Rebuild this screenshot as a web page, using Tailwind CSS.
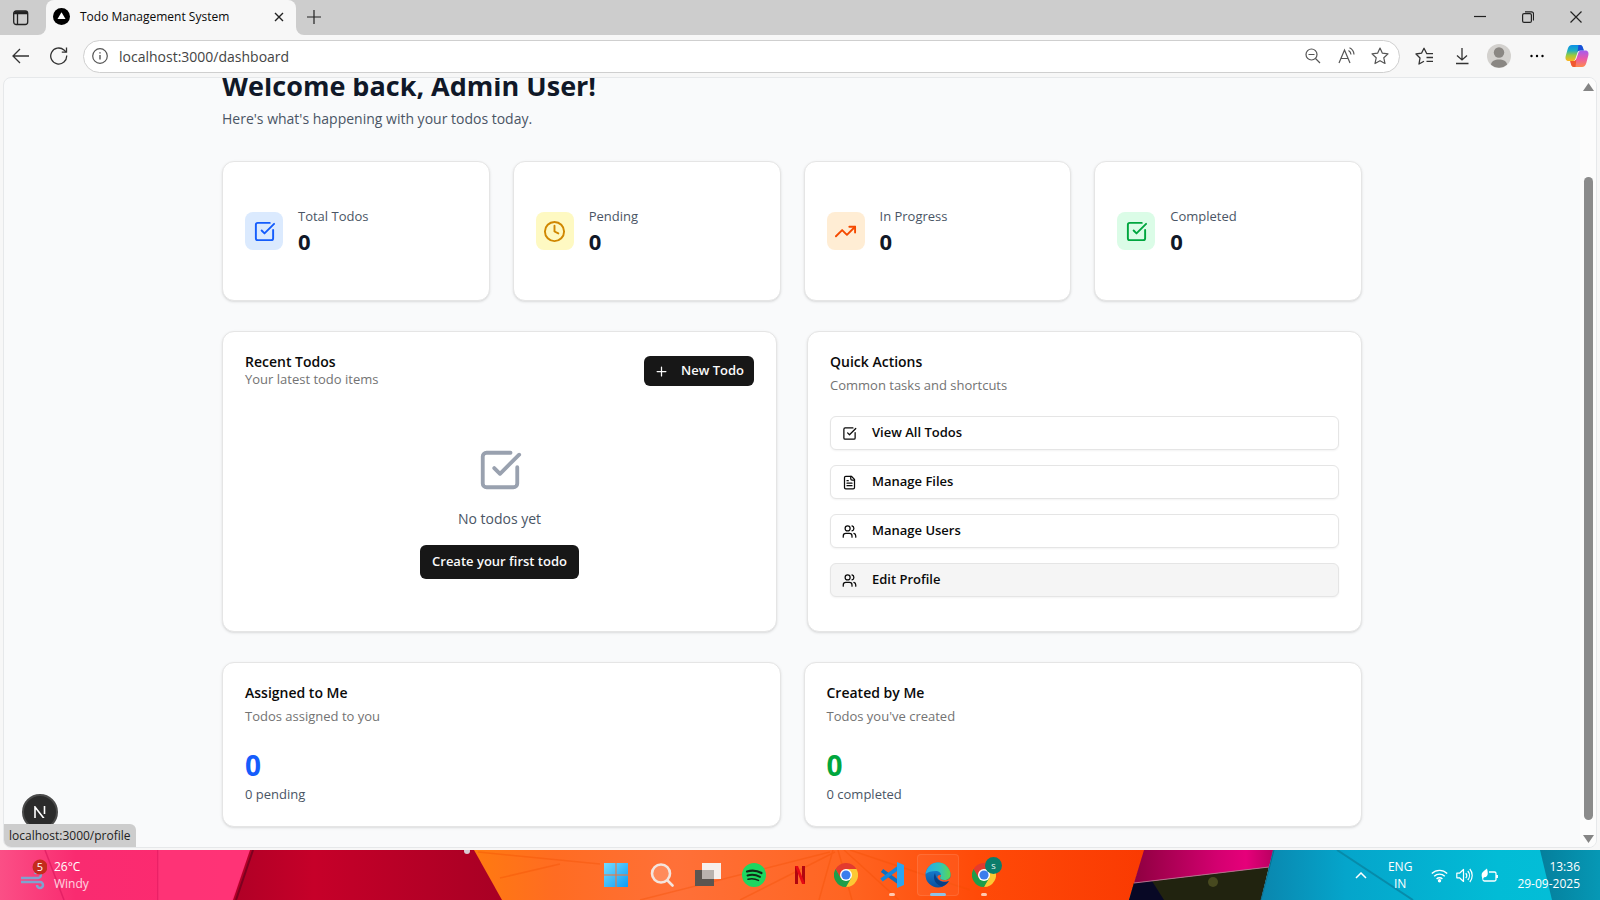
<!DOCTYPE html>
<html lang="en">
<head>
<meta charset="utf-8">
<title>Todo Management System</title>
<script src="https://cdn.jsdelivr.net/npm/@tailwindcss/browser@4"></script>
</head>
<body class="font-['Open_Sans','Noto_Sans',sans-serif] text-[13px] text-neutral-950">
<svg class="hidden">
  <symbol id="check" viewBox="0 0 24 24"><g fill="none" stroke="currentColor" stroke-width="2" stroke-linecap="round" stroke-linejoin="round"><path d="M21 10.500V19a2 2 0 0 1-2 2H5a2 2 0 0 1-2-2V5a2 2 0 0 1 2-2h12.500"/><path d="m9 11 3 3L22 4"/></g></symbol>
  <symbol id="clock" viewBox="0 0 24 24"><g fill="none" stroke="currentColor" stroke-width="2" stroke-linecap="round" stroke-linejoin="round"><circle cx="12" cy="12" r="10"/><path d="M12 6v6l4 2"/></g></symbol>
  <symbol id="trend" viewBox="0 0 24 24"><g fill="none" stroke="currentColor" stroke-width="2" stroke-linecap="round" stroke-linejoin="round"><path d="M16 7h6v6"/><path d="m22 7-8.500 8.500-5-5L2 17"/></g></symbol>
  <symbol id="file" viewBox="0 0 24 24"><g fill="none" stroke="currentColor" stroke-width="2" stroke-linecap="round" stroke-linejoin="round"><path d="M15 2H6a2 2 0 0 0-2 2v16a2 2 0 0 0 2 2h12a2 2 0 0 0 2-2V7Z"/><path d="M14 2v4a2 2 0 0 0 2 2h4M10 9H8M16 13H8M16 17H8"/></g></symbol>
  <symbol id="users" viewBox="0 0 24 24"><g fill="none" stroke="currentColor" stroke-width="2" stroke-linecap="round" stroke-linejoin="round"><path d="M16 21v-2a4 4 0 0 0-4-4H6a4 4 0 0 0-4 4v2"/><circle cx="9" cy="7" r="4"/><path d="M22 21v-2a4 4 0 0 0-3-3.870M16 3.130a4 4 0 0 1 0 7.750"/></g></symbol>
  <symbol id="chrome" viewBox="0 0 24 24"><path fill="#fcc934" d="M17.200 9 12 24A12 12 0 0 0 22.400 6H12Z"/><path fill="#e33b2e" d="M1.600 6A12 12 0 0 1 22.400 6H12L6.800 15Z"/><path fill="#1e9e4a" d="M1.600 6A12 12 0 0 0 12 24l5.200-9-10.400 0Z"/><circle cx="12" cy="12" r="6" fill="#fff"/><circle cx="12" cy="12" r="4.600" fill="#3b7ded"/></symbol>
</svg>

<div class="flex h-screen flex-col overflow-hidden bg-[#f7f7f7]">
  <!-- Tab strip -->
  <header class="flex h-[35px] shrink-0">
    <div class="flex w-[46px] items-center rounded-br-lg bg-[#cdcdcd] pl-3">
      <button aria-label="Tab actions"><svg class="size-[18px]" viewBox="0 0 18 18" fill="none" stroke="#222" stroke-width="1.300"><rect x="1.700" y="2" width="14" height="13.500" rx="2.500"/><path d="M1.700 4.500h14M5.500 4v11.500"/><path d="M2.500 3.500h12.500" stroke-width="2.500"/></svg></button>
    </div>
    <div class="w-[250px] bg-[#cdcdcd]">
      <div class="flex h-full items-center rounded-t-lg bg-[#f7f7f7] pr-2 pb-[2px] pl-[7px]">
        <svg class="size-[17px]" viewBox="0 0 17 17"><circle cx="8.500" cy="8.500" r="8.500"/><path d="M8.500 4.200 12.500 11h-8Z" fill="#fff"/></svg>
        <span class="ml-[10px] flex-1 text-[12px]">Todo Management System</span>
        <button aria-label="Close tab" class="grid size-[18px] place-items-center"><svg class="size-[10px]" viewBox="0 0 10 10" stroke="#222" stroke-width="1.400"><path d="m1 1 8 8M9 1 1 9"/></svg></button>
      </div>
    </div>
    <div class="flex flex-1 items-center rounded-bl-lg bg-[#cdcdcd] pb-[2px] pl-[10px]">
      <button aria-label="New tab"><svg class="size-4" viewBox="0 0 16 16" stroke="#222" stroke-width="1.200"><path d="M8 1v14M1 8h14"/></svg></button>
      <div class="ml-auto flex">
        <button aria-label="Minimize" class="grid w-12 place-items-center"><svg class="size-3" viewBox="0 0 12 12" stroke="#222" stroke-width="1.200"><path d="M0 5.500h12"/></svg></button>
        <button aria-label="Restore" class="grid w-12 place-items-center"><svg class="size-3" viewBox="0 0 12 12" fill="none" stroke="#222" stroke-width="1.200"><rect x=".6" y="2.600" width="8.800" height="8.800" rx="1.500"/><path d="M3 .8h6.500a2 2 0 0 1 2 2V9.500"/></svg></button>
        <button aria-label="Close window" class="grid w-12 place-items-center"><svg class="size-3" viewBox="0 0 12 12" stroke="#222" stroke-width="1.200"><path d="m.5.5 11 11m0-11-11 11"/></svg></button>
      </div>
    </div>
  </header>

  <!-- Toolbar -->
  <nav class="flex h-[42px] shrink-0 items-center pr-[11px] pl-3 text-[#333]">
    <button aria-label="Back"><svg class="size-[18px]" viewBox="0 0 18 18" fill="none" stroke="currentColor" stroke-width="1.300"><path d="M17 9H1M8 2 1 9l7 7"/></svg></button>
    <button aria-label="Refresh" class="ml-5"><svg class="size-[18px]" viewBox="0 0 18 18" fill="none" stroke="currentColor" stroke-width="1.300"><path d="M16.700 8.500A8 8 0 1 1 14 3l2 2"/><path d="M16.500 0.500V5.200h-4.700"/></svg></button>
    <div class="ml-[15px] flex h-[33px] flex-1 items-center rounded-full border border-[#cfcfcf] bg-white pr-[10px] pl-2 text-[#555]">
      <svg class="size-4" viewBox="0 0 16 16" fill="none" stroke="currentColor" stroke-width="1.200"><circle cx="8" cy="8" r="7.300"/><path d="M8 7v4.500M8 4.200v1.400" stroke-width="1.400"/></svg>
      <input aria-label="Address" value="localhost:3000/dashboard" class="ml-[11px] min-w-0 flex-1 bg-transparent text-[14px] text-[#444] outline-none">
      <button aria-label="Zoom out"><svg class="size-4" viewBox="0 0 16 16" fill="none" stroke="currentColor" stroke-width="1.200"><circle cx="6.500" cy="6.500" r="5.500"/><path d="M3.500 6.500h6M10.500 10.500 15 15"/></svg></button>
      <button aria-label="Read aloud" class="ml-[17px]"><svg class="size-[18px]" viewBox="0 0 18 18" fill="none" stroke="currentColor" stroke-width="1.200"><path d="M1 16 6.500 3 12 16M3 11.500h7M10.500 3.500a5 5 0 0 1 2.500 4M11.500.8a8 8 0 0 1 4.500 6.700"/></svg></button>
      <button aria-label="Add to favorites" class="ml-[15px]"><svg class="size-[18px]" viewBox="0 0 18 18" fill="none" stroke="currentColor" stroke-width="1.200" stroke-linejoin="round"><path d="m9 1 2.400 5.200 5.600.7-4.200 3.900 1.200 5.700L9 13.700l-5 2.800 1.200-5.700L1 6.900l5.600-.7Z"/></svg></button>
    </div>
    <button aria-label="Favorites" class="ml-[15px]"><svg class="size-[19px]" viewBox="0 0 19 19" fill="none" stroke="currentColor" stroke-width="1.300" stroke-linejoin="round"><path d="M18 6.700h-6.200L9 1.300 6.500 6.200 1 7l4 4-1 6 5-2.700M11.500 10.500H18M11.500 14.300H18"/></svg></button>
    <button aria-label="Downloads" class="ml-[19px]"><svg class="size-[18px]" viewBox="0 0 18 18" fill="none" stroke="currentColor" stroke-width="1.300"><path d="M9 1v12M4 8.500 9 13l5-4.500M3 16.500h12.500"/></svg></button>
    <button aria-label="Profile" class="ml-4"><svg class="size-6" viewBox="0 0 24 24"><circle cx="12" cy="12" r="12" fill="#d3d1ce"/><circle cx="12" cy="8.500" r="5.200" fill="#8a8783"/><path d="M4 20.800c0-7 16-7 16 0a12 12 0 0 1-16 0Z" fill="#8a8783"/></svg></button>
    <button aria-label="More" class="ml-[18px]"><svg class="size-4" viewBox="0 0 16 16"><circle cx="2.500" cy="8" r="1.200"/><circle cx="8" cy="8" r="1.200"/><circle cx="13.500" cy="8" r="1.200"/></svg></button>
    <button aria-label="Copilot" class="ml-5"><svg class="size-6" viewBox="0 0 24 24">
      <defs><linearGradient id="cl" x2="0" y2="1"><stop stop-color="#0b8fe8"/><stop offset=".35" stop-color="#1fb0c0"/><stop offset=".65" stop-color="#9ccb3c"/><stop offset="1" stop-color="#ffb51f"/></linearGradient><linearGradient id="cr" x2="0" y2="1"><stop stop-color="#a45cf0"/><stop offset=".5" stop-color="#e95aa8"/><stop offset="1" stop-color="#ff8a4c"/></linearGradient></defs>
      <path d="M7 1h8c2 0 2.600 1.500 3 3l.8 2.500h-4c-1.500 0-2 1-2.400 2.200l-2 6C9.800 16.500 9 17 7 17H4c-3 0-4-2-3.300-5l2-7C3.500 2.500 4.800 1 7 1Z" fill="url(#cl)"/>
      <path d="M13.500 1H15c2 0 2.600 1.500 3 3l.8 2.500h-4c-1.200 0-2 .7-2.400 2Z" fill="#1b50d8"/>
      <path d="M17 23H9c-2 0-2.600-1.500-3-3l-.8-3H9c1.500 0 2-1 2.400-2.200l2-6C14 7 15 6.500 17 6.500h3c3 0 4 2 3.300 5l-2 7.500C20.500 21.500 19.200 23 17 23Z" fill="url(#cr)"/>
      <path d="M10.500 23H9c-2 0-2.600-1.500-3-3l-.8-3H9c1.500 0 2-1 2.400-2.200Z" fill="#f0582e"/></svg></button>
  </nav>

  <!-- Page viewport -->
  <div class="relative mx-[3px] mb-[2px] flex min-h-0 flex-1 overflow-hidden rounded-lg border border-[#e6e8ea] bg-gray-50">
    <main class="flex-1">
      <div class="mx-auto w-full max-w-[1140px]">
        <h1 class="text-[27px] leading-4 font-bold text-gray-900">Welcome back, Admin User!</h1>
        <p class="mt-[14px] text-[14px] leading-[22px] text-gray-600">Here's what's happening with your todos today.</p>

        <section class="mt-[31px] grid grid-cols-4 gap-[23px]">
          <div class="flex h-[140px] items-center rounded-xl border border-neutral-200 bg-white px-[22px] shadow-sm">
            <span class="grid size-[38px] place-items-center rounded-lg bg-blue-100 text-blue-600"><svg class="size-[23px]"><use href="#check"/></svg></span>
            <div class="ml-[15px]"><p class="text-[13px] leading-5 font-medium text-gray-600">Total Todos</p><p class="text-[22px] leading-[30px] font-bold text-gray-900">0</p></div>
          </div>
          <div class="flex h-[140px] items-center rounded-xl border border-neutral-200 bg-white px-[22px] shadow-sm">
            <span class="grid size-[38px] place-items-center rounded-lg bg-yellow-100 text-yellow-600"><svg class="size-[23px]"><use href="#clock"/></svg></span>
            <div class="ml-[15px]"><p class="text-[13px] leading-5 font-medium text-gray-600">Pending</p><p class="text-[22px] leading-[30px] font-bold text-gray-900">0</p></div>
          </div>
          <div class="flex h-[140px] items-center rounded-xl border border-neutral-200 bg-white px-[22px] shadow-sm">
            <span class="grid size-[38px] place-items-center rounded-lg bg-orange-100 text-orange-600"><svg class="size-[23px]"><use href="#trend"/></svg></span>
            <div class="ml-[15px]"><p class="text-[13px] leading-5 font-medium text-gray-600">In Progress</p><p class="text-[22px] leading-[30px] font-bold text-gray-900">0</p></div>
          </div>
          <div class="flex h-[140px] items-center rounded-xl border border-neutral-200 bg-white px-[22px] shadow-sm">
            <span class="grid size-[38px] place-items-center rounded-lg bg-green-100 text-green-600"><svg class="size-[23px]"><use href="#check"/></svg></span>
            <div class="ml-[15px]"><p class="text-[13px] leading-5 font-medium text-gray-600">Completed</p><p class="text-[22px] leading-[30px] font-bold text-gray-900">0</p></div>
          </div>
        </section>

        <section class="mt-[30px] grid grid-cols-2 gap-[30px]">
          <div class="rounded-xl border border-neutral-200 bg-white px-[22px] pt-[22px] pb-[52px] shadow-sm">
            <div class="flex items-center justify-between">
              <div><h2 class="text-[14px] leading-4 font-semibold">Recent Todos</h2><p class="text-[13px] leading-[18px] text-neutral-500">Your latest todo items</p></div>
              <button class="flex h-[30px] items-center rounded-md bg-neutral-900 px-[10px] font-semibold text-neutral-50"><svg class="size-[15px]" viewBox="0 0 24 24" fill="none" stroke="currentColor" stroke-width="2" stroke-linecap="round"><path d="M5 12h14M12 5v14"/></svg><span class="ml-[12px]">New Todo</span></button>
            </div>
            <div class="mt-[59px] flex flex-col items-center">
              <svg class="size-[46px] text-gray-400"><use href="#check"/></svg>
              <p class="mt-[14px] text-[14px] leading-[23px] text-gray-600">No todos yet</p>
              <button class="mt-[15px] h-[34px] rounded-md bg-neutral-900 px-[12px] font-semibold text-neutral-50">Create your first todo</button>
            </div>
          </div>
          <div class="rounded-xl border border-neutral-200 bg-white px-[22px] pt-[22px] shadow-sm">
            <h2 class="text-[14px] leading-4 font-semibold">Quick Actions</h2>
            <p class="mt-[5px] text-[13px] leading-5 text-neutral-500">Common tasks and shortcuts</p>
            <div class="mt-[21px] flex flex-col gap-[15px]">
              <a href="#" class="flex h-[34px] items-center rounded-md border border-neutral-200 bg-white px-[11px] font-semibold shadow-xs"><svg class="size-[15px]"><use href="#check"/></svg><span class="ml-[15px]">View All Todos</span></a>
              <a href="#" class="flex h-[34px] items-center rounded-md border border-neutral-200 bg-white px-[11px] font-semibold shadow-xs"><svg class="size-[15px]"><use href="#file"/></svg><span class="ml-[15px]">Manage Files</span></a>
              <a href="#" class="flex h-[34px] items-center rounded-md border border-neutral-200 bg-white px-[11px] font-semibold shadow-xs"><svg class="size-[15px]"><use href="#users"/></svg><span class="ml-[15px]">Manage Users</span></a>
              <a href="#" class="flex h-[34px] items-center rounded-md border border-neutral-200 bg-neutral-100 px-[11px] font-semibold shadow-xs"><svg class="size-[15px]"><use href="#users"/></svg><span class="ml-[15px]">Edit Profile</span></a>
            </div>
          </div>
        </section>

        <section class="mt-[30px] grid grid-cols-2 gap-[23px]">
          <div class="rounded-xl border border-neutral-200 bg-white px-[22px] pt-[22px] pb-[22px] shadow-sm">
            <h2 class="text-[14px] leading-4 font-semibold">Assigned to Me</h2>
            <p class="mt-[5px] text-[13px] leading-5 text-neutral-500">Todos assigned to you</p>
            <p class="mt-[22px] text-[28px] leading-[34px] font-bold text-blue-600">0</p>
            <p class="mt-[2px] text-[13px] leading-5 text-gray-600">0 pending</p>
          </div>
          <div class="rounded-xl border border-neutral-200 bg-white px-[22px] pt-[22px] pb-[22px] shadow-sm">
            <h2 class="text-[14px] leading-4 font-semibold">Created by Me</h2>
            <p class="mt-[5px] text-[13px] leading-5 text-neutral-500">Todos you've created</p>
            <p class="mt-[22px] text-[28px] leading-[34px] font-bold text-green-600">0</p>
            <p class="mt-[2px] text-[13px] leading-5 text-gray-600">0 completed</p>
          </div>
        </section>
      </div>
    </main>
    <!-- Scroll bar -->
    <div class="flex w-4 flex-col items-center bg-[#fcfcfc] pt-[5px] pb-1">
      <svg class="h-2 w-[11px]" viewBox="0 0 11 8" fill="#858585"><path d="M5.500 0 11 8H0Z"/></svg>
      <div class="mt-[86px] mb-[15px] w-[9px] flex-1 rounded-full bg-[#8b8b8b]"></div>
      <svg class="h-2 w-[11px]" viewBox="0 0 11 8" fill="#858585"><path d="M0 0h11L5.500 8Z"/></svg>
    </div>
    <button aria-label="Open Next.js Dev Tools" class="absolute bottom-[17px] left-[18px] grid size-9 place-items-center rounded-full border-2 border-[#4a4a4a] bg-[#2b2b2b]"><svg class="size-3" viewBox="0 0 12 12" fill="none" stroke="#fff" stroke-width="1.600"><path d="M1 12V1l9 11.500M10.500 0v8"/></svg></button>
    <div class="absolute bottom-0 left-0 rounded-tr-md bg-[#cdcdcd] px-[5px] text-[12px] leading-[23px] text-[#222]">localhost:3000/profile</div>
  </div>

  <!-- Taskbar over the wallpaper -->
  <footer class="relative flex h-[50px] shrink-0 items-center justify-between text-[12px] leading-[17px] text-white">
    <svg class="absolute inset-0 size-full" viewBox="0 0 1600 50" preserveAspectRatio="none">
      <defs>
        <linearGradient id="pk"><stop stop-color="#fb4f86"/><stop offset=".3" stop-color="#f92b70"/><stop offset="1" stop-color="#ff2a70"/></linearGradient>
        <linearGradient id="rd"><stop stop-color="#b00026"/><stop offset=".3" stop-color="#c60029"/><stop offset="1" stop-color="#a80024"/></linearGradient>
        <linearGradient id="or"><stop stop-color="#ff7a10"/><stop offset=".12" stop-color="#ff6c22"/><stop offset=".3" stop-color="#ff7038"/><stop offset=".55" stop-color="#ff6522"/><stop offset=".75" stop-color="#ff4a08"/><stop offset="1" stop-color="#fa3a02"/></linearGradient>
        <linearGradient id="mg"><stop stop-color="#8e0040"/><stop offset=".6" stop-color="#d40070"/><stop offset=".8" stop-color="#e6007a"/><stop offset="1" stop-color="#b80060"/></linearGradient>
        <linearGradient id="cy"><stop stop-color="#0a86ae"/><stop offset=".25" stop-color="#05a5cb"/><stop offset=".7" stop-color="#02bcd6"/><stop offset="1" stop-color="#04bfd8"/></linearGradient>
        <linearGradient id="te"><stop stop-color="#057f9c"/><stop offset="1" stop-color="#0698b5"/></linearGradient>
      </defs>
      <path fill="url(#pk)" d="M0 0h252l-18 50H0Z"/>
      <path d="M45 0 64 50M158 0v50" stroke="#d8165c" stroke-width="1.500" opacity=".6"/>
      <path d="M158 0h92l-18 50h-74Z" fill="#ff3c7c" opacity=".5"/>
      <path fill="url(#rd)" d="M250 0h226l28 50H233Z"/>
      <path d="m253 0-17 50" stroke="#7d0020" stroke-width="2"/>
      <path fill="url(#or)" d="M474 0h671l-16 50H502Z"/>
      <path d="M478 2 600 14M500 28l60-14M640 50l190-48M740 50l95-48M833 0l-14 50M838 0l14 50M844 0l55 50M850 0l120 40" stroke="#f04c00" stroke-width="1.500" opacity=".35" fill="none"/>
      <path fill="url(#mg)" d="M1144 0h130l-5 17-135 16Z"/>
      <path fill="#21230f" d="m1134 33 135-16-8 33h-132Z"/>
      <path fill="#080825" d="m1134 33 18-2 12 19h-35Z"/>
      <circle cx="1213" cy="32" r="5" fill="#47491f"/>
      <path d="m1134 33 135-16" stroke="#b76b8c" stroke-width="1"/>
      <path fill="url(#cy)" d="M1273 0h327v50h-339Z"/>
      <path fill="url(#te)" d="M1540 0h60v50h-48Z"/>
      <path d="m1337 0 76 50" stroke="#078baa" stroke-width="2"/>
      <path d="m1274 0-13 50" stroke="#0b6d8c" stroke-width="1"/>
      <circle cx="467" cy="1" r="3" fill="#d9cbd4"/>
    </svg>
    <div class="relative flex flex-1 items-center pl-5">
      <svg class="h-8 w-[27px]" viewBox="0 0 27 32"><g fill="none" stroke="#7fa3cf" stroke-width="2.500"><path d="M1 19h17a3 3 0 1 0-3-4M1 23h19a3 3 0 1 1-3 3"/></g><circle cx="20" cy="8" r="7.500" fill="#c42b1c"/><text x="20" y="12" text-anchor="middle" font-size="11" fill="#fff">5</text></svg>
      <div class="ml-[7px]"><p>26°C</p><p class="text-white/80">Windy</p></div>
    </div>
    <div class="relative flex">
      <button aria-label="Start" class="grid h-[42px] w-[46px] place-items-center"><svg class="size-6" viewBox="0 0 24 24"><defs><linearGradient id="w" x2="1" y2="1"><stop stop-color="#74dcff"/><stop offset="1" stop-color="#0d9cf5"/></linearGradient></defs><path fill="url(#w)" d="M0 0h11.500v11.500H0ZM12.500 0H24v11.500H12.500ZM0 12.500h11.500V24H0ZM12.500 12.500H24V24H12.500Z"/></svg></button>
      <button aria-label="Search" class="grid h-[42px] w-[46px] place-items-center"><svg class="size-6" viewBox="0 0 24 24" fill="#ffffff30" stroke="#f4e4dd" stroke-width="2.600" stroke-linecap="round"><circle cx="11" cy="10.500" r="9"/><path d="m17.500 17.500 5 5"/></svg></button>
      <button aria-label="Task view" class="grid h-[42px] w-[46px] place-items-center"><svg class="size-[26px]" viewBox="0 0 26 26"><path fill="#f6efec" d="M7 1h19v16H7Z"/><path fill="#5b5550" d="M0 8h19v16H0Z"/><path fill="#b9b2ae" d="M7 8h12v9H7Z"/></svg></button>
      <button aria-label="Spotify" class="grid h-[42px] w-[46px] place-items-center"><svg class="size-6" viewBox="0 0 24 24" fill="none" stroke="#102a18" stroke-linecap="round"><circle cx="12" cy="12" r="12" fill="#1ed760" stroke="none"/><path d="M5 8.500c5-1.500 10-1 14.500 1.500" stroke-width="2.200"/><path d="M5.500 12.500c4-1.200 8.500-.8 12.500 1.400" stroke-width="1.900"/><path d="M6 16.200c3.500-1 7.200-.6 10.500 1.200" stroke-width="1.500"/></svg></button>
      <button aria-label="Netflix" class="grid h-[42px] w-[46px] place-items-center"><svg class="h-[18px] w-[10px]" viewBox="0 0 10 18"><path fill="#b1060f" d="M0 0h3v18H0ZM7 0h3v18H7Z"/><path fill="#e50914" d="M0 0h3l7 18H7Z"/></svg></button>
      <button aria-label="Chrome" class="grid h-[42px] w-[46px] place-items-center"><svg class="size-6"><use href="#chrome"/></svg></button>
      <button aria-label="Visual Studio Code" class="relative grid h-[42px] w-[46px] place-items-center"><svg class="size-[26px]" viewBox="0 0 26 26"><path fill="none" stroke="#0f6fc0" stroke-width="4" stroke-linejoin="round" d="M19 20 3 8.500"/><path fill="none" stroke="#1687dc" stroke-width="4" d="M19 6 2.500 18"/><path fill="#2aa5f2" d="m18 0 7 3v20l-7 3Z"/></svg><i class="absolute bottom-0 h-[3px] w-[6px] rounded-full bg-[#ffc9b0]"></i></button>
      <button aria-label="Edge" class="relative grid h-[42px] w-[46px] place-items-center"><span class="absolute inset-x-[2px] inset-y-0 rounded border border-white/10 bg-white/5"></span><svg class="relative size-[26px]" viewBox="0 0 26 26"><defs><linearGradient id="e1"><stop stop-color="#2aa8e8"/><stop offset=".55" stop-color="#2fc3c0"/><stop offset="1" stop-color="#5fd84a"/></linearGradient><linearGradient id="e2" y2="1" x2="0"><stop stop-color="#1b8fe0"/><stop offset="1" stop-color="#0b4f9e"/></linearGradient></defs><circle cx="13" cy="13" r="12.500" fill="url(#e2)"/><path fill="url(#e1)" d="M.6 12A12.500 12.500 0 0 1 25.500 12c.2 4-2.500 6-6 6-3 0-4.500-1-4.500-2 0-.8 1-1.200 1-3 0-2.300-2.300-4-5-4-4.500 0-8.500 1-10.400 3Z"/><path fill="#083f86" d="M10 11c-3 6 1 12 7 13.500a12.500 12.500 0 0 0 7-6c-6 3-13 1-14-7.500Z"/><path fill="#ff5a1c" d="M16 13c0 1.700-1 2.200-1 3 0 1.400 2 2.200 4.500 2.200 2 0 4-.7 5.500-2.200l1 4-2.500-1c-3 1.200-9 1-11-3.500-.5-1.500 1-3 3.500-2.500Z"/></svg><i class="absolute bottom-0 h-[3px] w-4 rounded-full bg-[#8fc3e6]"></i></button>
      <button aria-label="Chrome profile" class="relative grid h-[42px] w-[46px] place-items-center"><svg class="size-6"><use href="#chrome"/></svg><span class="absolute top-[3px] right-[5px] grid size-[17px] place-items-center rounded-full bg-[#0b7d6b] text-[8px] leading-none">S</span><i class="absolute bottom-0 h-[3px] w-[6px] rounded-full bg-[#ffc9b0]"></i></button>
    </div>
    <div class="relative flex flex-1 items-center justify-end pr-5">
      <svg class="h-[7px] w-[12px]" viewBox="0 0 12 7" fill="none" stroke="#fff" stroke-width="1.500"><path d="m1 6 5-5 5 5"/></svg>
      <div class="ml-[21px] text-center"><p>ENG</p><p>IN</p></div>
      <svg class="ml-[19px] h-[15px] w-[17px]" viewBox="0 0 17 15" fill="none" stroke="#fff" stroke-width="1.400"><path d="M.8 5.500a11 11 0 0 1 15.400 0M3.200 8.300a7.500 7.500 0 0 1 10.600 0M5.600 11a4 4 0 0 1 5.800 0"/><circle cx="8.500" cy="12.800" r="1" fill="#fff"/></svg>
      <svg class="ml-2 h-[15px] w-[17px]" viewBox="0 0 17 15" fill="none" stroke="#fff" stroke-width="1.200" stroke-linejoin="round"><path d="M.8 5.200h2.700L7.500 1.500v12l-4-3.700H.8ZM9.800 5a4 4 0 0 1 0 5M11.800 3a7 7 0 0 1 0 9M13.800 1a10 10 0 0 1 0 13"/></svg>
      <svg class="ml-2 h-[15px] w-[17px]" viewBox="0 0 17 15" fill="none" stroke="#fff" stroke-width="1.300"><path d="M8 4h5.500a1.500 1.500 0 0 1 1.500 1.500v6a1.500 1.500 0 0 1-1.500 1.500H3.500A1.500 1.500 0 0 1 2 11.500M16.300 7v3"/><path d="M1 9.500C-.5 4 3 3.500 6 .5c1.500 5 1 9-3 8.800L1.500 12" fill="#fff" stroke="none"/></svg>
      <div class="ml-[19px] text-right"><p>13:36</p><p>29-09-2025</p></div>
    </div>
  </footer>
</div>
</body>
</html>
